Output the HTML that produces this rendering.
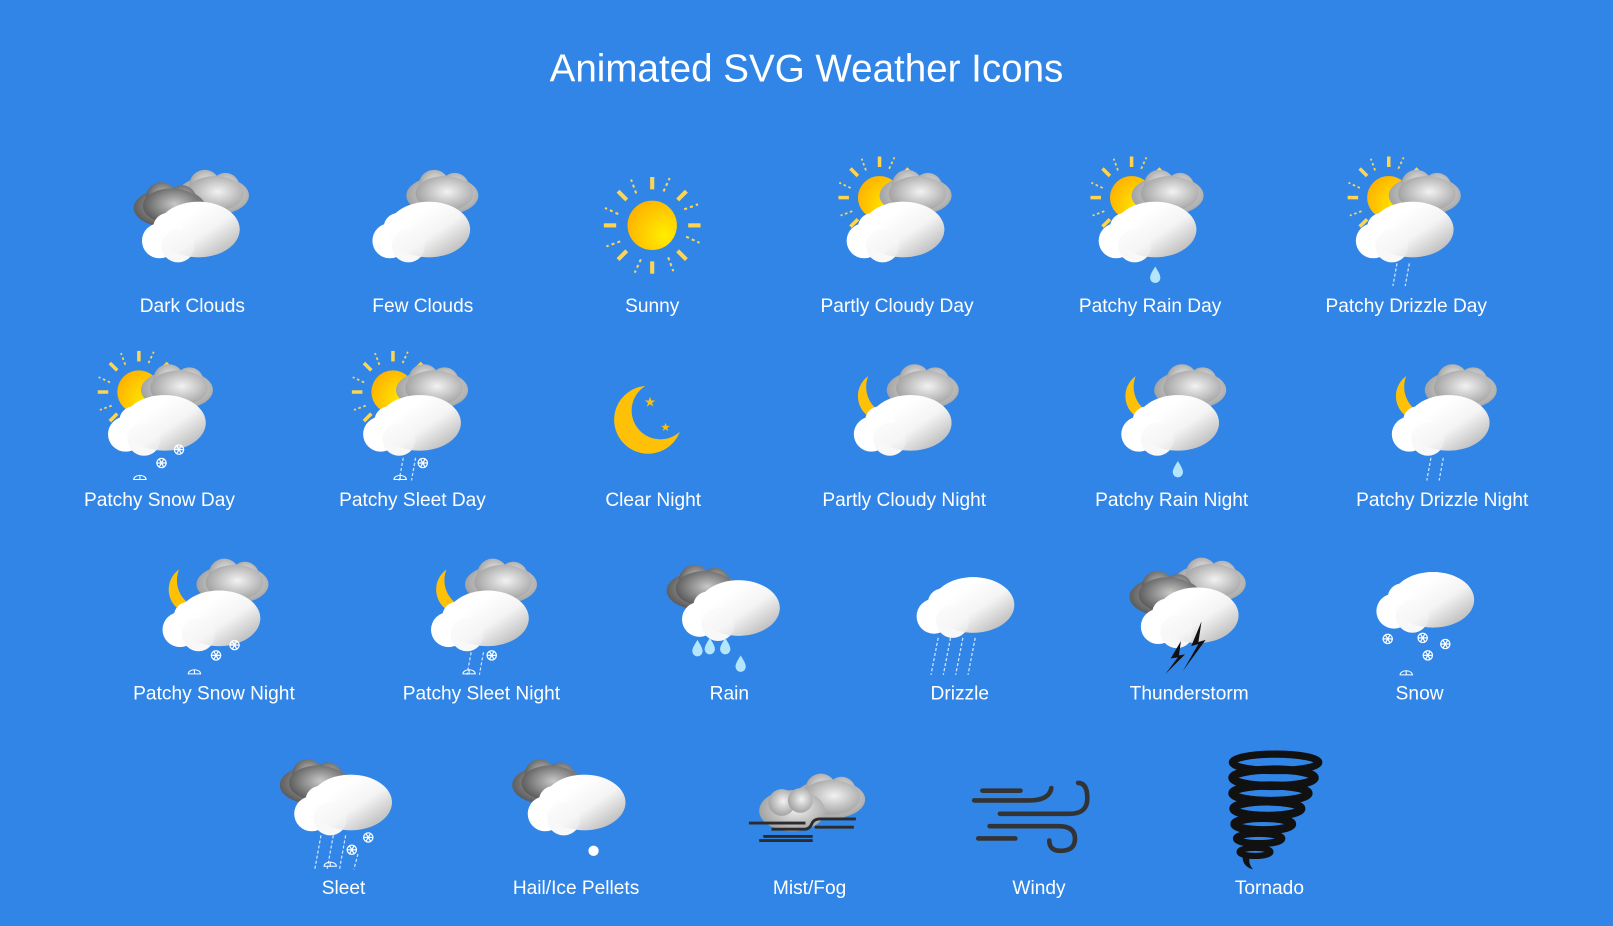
<!DOCTYPE html>
<html><head><meta charset="utf-8"><style>
html,body{margin:0;padding:0;background:#3185e6;overflow:hidden}
svg{display:block}
text{font-family:"Liberation Sans",sans-serif;fill:#fff}
</style></head><body>
<svg width="1613" height="926" viewBox="0 0 1568 900" xmlns="http://www.w3.org/2000/svg">
<defs>
<linearGradient id="gw" x1="0.3" y1="0.3" x2="0.9" y2="0.9"><stop offset="0" stop-color="#fff"/><stop offset="0.45" stop-color="#f4f4f4"/><stop offset="1" stop-color="#b9b9b9"/></linearGradient>
<radialGradient id="gg" cx="0.55" cy="0.45" r="0.6"><stop offset="0" stop-color="#f2f2f2"/><stop offset="1" stop-color="#9c9c9c"/></radialGradient>
<radialGradient id="gd" cx="0.55" cy="0.45" r="0.6"><stop offset="0" stop-color="#c8c8c8"/><stop offset="1" stop-color="#555"/></radialGradient>
<radialGradient id="gs" cx="0.75" cy="0.7" r="0.8"><stop offset="0" stop-color="#ffee00"/><stop offset="1" stop-color="#ffb300"/></radialGradient>
<g id="front">
 <ellipse cx="8" cy="-2" rx="40" ry="27" fill="url(#gw)"/>
 <circle cx="-30" cy="9" r="17" fill="#fff"/>
 <circle cx="-22" cy="-4" r="14" fill="#fff"/>
 <circle cx="-12" cy="14" r="16" fill="#f8f8f8"/>
 <ellipse cx="8" cy="-2" rx="40" ry="27" fill="url(#gw)" opacity="0.6"/>
</g>
<g id="back">
 <ellipse cx="0" cy="2" rx="35" ry="19" fill="url(#gg)"/>
 <circle cx="-8" cy="-8" r="15" fill="url(#gg)"/>
 <circle cx="12" cy="-6" r="14" fill="url(#gg)"/>
 <ellipse cx="2" cy="0" rx="28" ry="17" fill="url(#gg)"/>
</g>
<g id="dark">
 <ellipse cx="0" cy="2" rx="35" ry="19" fill="url(#gd)"/>
 <circle cx="-8" cy="-8" r="15" fill="url(#gd)"/>
 <circle cx="12" cy="-6" r="14" fill="url(#gd)"/>
 <ellipse cx="2" cy="0" rx="28" ry="17" fill="url(#gd)"/>
</g>
<g id="rays" stroke="#ffd54f" stroke-width="4">
 <g id="ray1"><line x1="0" y1="-35" x2="0" y2="-47"/><line x1="11" y1="-33" x2="17" y2="-46" stroke-width="2" stroke-dasharray="3 3"/></g>
 <use href="#ray1" transform="rotate(45)"/><use href="#ray1" transform="rotate(90)"/><use href="#ray1" transform="rotate(135)"/>
 <use href="#ray1" transform="rotate(180)"/><use href="#ray1" transform="rotate(225)"/><use href="#ray1" transform="rotate(270)"/><use href="#ray1" transform="rotate(315)"/>
</g>
<g id="sun"><use href="#rays"/><circle r="24" fill="url(#gs)"/></g>
<g id="psun"><use href="#rays" transform="scale(0.85)"/><circle r="21" fill="url(#gs)"/></g>
<mask id="mm" maskUnits="userSpaceOnUse" x="-60" y="-60" width="120" height="120"><rect x="-60" y="-60" width="120" height="120" fill="#fff"/><circle cx="12" cy="-9" r="28" fill="#000"/></mask>
<g id="moon"><circle r="33" fill="#ffc107" mask="url(#mm)"/></g>
<g id="smoon"><circle r="24" fill="#ffc107" mask="url(#mm)"/></g>
<path id="drop" d="M0,-8 C3,-3 5,0 5,3 A5,5 0 0 1 -5,3 C-5,0 -3,-3 0,-8Z" fill="#b3e5fc"/>
<g id="flake" stroke="#fff" stroke-width="1.2" fill="none"><circle r="4.5"/><line x1="-5" y1="0" x2="5" y2="0"/><line x1="-2.5" y1="-4.3" x2="2.5" y2="4.3"/><line x1="2.5" y1="-4.3" x2="-2.5" y2="4.3"/></g>
<g id="pile" stroke="#fff" stroke-width="1" fill="none"><path d="M-6,0 A6,4 0 0 1 6,0Z"/><line x1="0" y1="-4" x2="0" y2="0"/></g>
<g id="drz" stroke="#d0e4ff" stroke-width="1.2" stroke-dasharray="3 2"><line x1="0" y1="0" x2="-4" y2="22"/><line x1="12" y1="0" x2="8" y2="22"/></g>
</defs>

<text x="784" y="79" font-size="37.5" text-anchor="middle">Animated SVG Weather Icons</text>

<!-- Row 1 -->
<use href="#back" x="207" y="188"/><use href="#dark" x="165" y="200"/><use href="#front" x="185" y="225"/>
<use href="#back" x="430" y="188"/><use href="#front" x="409" y="225"/>
<use href="#sun" x="634" y="219"/>
<use href="#psun" x="855" y="192"/><use href="#back" x="890" y="188"/><use href="#front" x="870" y="225"/>
<use href="#psun" x="1100" y="192"/><use href="#back" x="1135" y="188"/><use href="#front" x="1115" y="225"/><use href="#drop" x="1123" y="267"/>
<use href="#psun" x="1350" y="192"/><use href="#back" x="1385" y="188"/><use href="#front" x="1365" y="225"/><use href="#drz" x="1358" y="256"/>

<g font-size="18.6" text-anchor="middle">
<text x="187" y="303">Dark Clouds</text><text x="411" y="303">Few Clouds</text><text x="634" y="303">Sunny</text>
<text x="872" y="303">Partly Cloudy Day</text><text x="1118" y="303">Patchy Rain Day</text><text x="1367" y="303">Patchy Drizzle Day</text>
<text x="155" y="492">Patchy Snow Day</text><text x="401" y="492">Patchy Sleet Day</text><text x="635" y="492">Clear Night</text>
<text x="879" y="492">Partly Cloudy Night</text><text x="1139" y="492">Patchy Rain Night</text><text x="1402" y="492">Patchy Drizzle Night</text>
<text x="208" y="680">Patchy Snow Night</text><text x="468" y="680">Patchy Sleet Night</text><text x="709" y="680">Rain</text>
<text x="933" y="680">Drizzle</text><text x="1156" y="680">Thunderstorm</text><text x="1380" y="680">Snow</text>
<text x="334" y="869">Sleet</text><text x="560" y="869">Hail/Ice Pellets</text><text x="787" y="869">Mist/Fog</text>
<text x="1010" y="869">Windy</text><text x="1234" y="869">Tornado</text>
</g>

<!-- Row 2 -->
<use href="#psun" x="135" y="381"/><use href="#back" x="172" y="377"/><use href="#front" x="152" y="413"/>
<use href="#flake" x="157" y="450"/><use href="#flake" x="174" y="437"/><use href="#pile" x="136" y="466"/>
<use href="#psun" x="382" y="381"/><use href="#back" x="420" y="377"/><use href="#front" x="400" y="413"/>
<use href="#flake" x="411" y="450"/><use href="#drz" x="392" y="445"/><use href="#pile" x="389" y="466"/>
<use href="#moon" x="630" y="408"/>
<text x="626" y="395" font-size="13" style="fill:#ffc107">★</text><text x="642" y="419" font-size="11" style="fill:#ffc107">★</text>
<use href="#smoon" x="858" y="385"/><use href="#back" x="897" y="377"/><use href="#front" x="877" y="413"/>
<use href="#smoon" x="1118" y="385"/><use href="#back" x="1157" y="377"/><use href="#front" x="1137" y="413"/><use href="#drop" x="1145" y="456"/>
<use href="#smoon" x="1381" y="385"/><use href="#back" x="1420" y="377"/><use href="#front" x="1400" y="413"/><use href="#drz" x="1391" y="445"/>

<!-- Row 3 -->
<use href="#smoon" x="188" y="573"/><use href="#back" x="226" y="566"/><use href="#front" x="205" y="603"/>
<use href="#flake" x="210" y="637"/><use href="#flake" x="228" y="627"/><use href="#pile" x="189" y="655"/>
<use href="#smoon" x="448" y="573"/><use href="#back" x="487" y="566"/><use href="#front" x="466" y="603"/>
<use href="#flake" x="478" y="637"/><use href="#drz" x="458" y="634"/><use href="#pile" x="456" y="655"/>
<use href="#dark" x="683" y="572"/><use href="#front" x="710" y="593"/>
<use href="#drop" x="678" y="630"/><use href="#drop" x="690" y="628"/><use href="#drop" x="705" y="628"/><use href="#drop" x="720" y="645"/>
<use href="#front" x="938" y="590"/>
<g stroke="#d0e4ff" stroke-width="1.2" stroke-dasharray="3 2"><line x1="912" y1="620" x2="905" y2="656"/><line x1="924" y1="620" x2="917" y2="656"/><line x1="936" y1="620" x2="929" y2="656"/><line x1="948" y1="620" x2="941" y2="656"/></g>
<use href="#back" x="1176" y="565"/><use href="#dark" x="1133" y="578"/><use href="#front" x="1156" y="600"/>
<path d="M1168,604 L1158,628 L1165,626 L1150,652 L1172,622 L1165,624 Z M1148,623 L1138,640 L1145,639 L1133,655 L1152,636 L1146,637 Z" fill="#111"/>
<use href="#front" x="1385" y="585"/>
<use href="#flake" x="1349" y="621"/><use href="#flake" x="1383" y="620"/><use href="#flake" x="1405" y="626"/><use href="#flake" x="1388" y="637"/><use href="#pile" x="1367" y="656"/>

<!-- Row 4 -->
<use href="#dark" x="307" y="761"/><use href="#front" x="333" y="782"/>
<use href="#flake" x="358" y="814"/><use href="#flake" x="342" y="826"/>
<g stroke="#d0e4ff" stroke-width="1.2" stroke-dasharray="3 2"><line x1="312" y1="812" x2="306" y2="845"/><line x1="324" y1="812" x2="318" y2="845"/><line x1="336" y1="812" x2="330" y2="845"/><line x1="348" y1="830" x2="344" y2="845"/></g>
<use href="#pile" x="321" y="842"/>
<use href="#dark" x="533" y="761"/><use href="#front" x="560" y="782"/>
<circle cx="577" cy="827" r="5" fill="#fff"/>
<use href="#back" x="806" y="775"/>
<g transform="translate(770,790)"><ellipse cx="0" cy="-2" rx="32" ry="20" fill="url(#gg)"/><circle cx="-10" cy="-10" r="13" fill="url(#gg)"/><circle cx="8" cy="-12" r="12" fill="url(#gg)"/></g>
<g stroke="#2b2b2b" stroke-width="2.8" fill="none">
<path d="M742,813 L790,813 M750,806 L782,806 Q787,806 789,801 Q791,796 797,796 L832,796 M728,800 L783,800 M792,804 L830,804 M738,817 L790,817"/>
</g>
<g stroke="#333" stroke-width="4.5" fill="none" stroke-linecap="round">
<path d="M955,768.5 L992,768.5"/>
<path d="M947,778 L1000,778 Q1020,778 1022,766"/>
<path d="M972,791 L1040,791 Q1057,791 1057,776 Q1057,761 1048,761"/>
<path d="M962,803 L1029,803 Q1045,803 1045,815 Q1045,827 1031,827 Q1020,827 1020,817"/>
<path d="M951,815 L987,815"/>
</g>
<g fill="none" stroke="#111">
<ellipse cx="1240" cy="741" rx="42" ry="8" stroke-width="7"/>
<ellipse cx="1238" cy="756" rx="40" ry="8" stroke-width="8"/>
<ellipse cx="1235" cy="771" rx="37" ry="7.5" stroke-width="8"/>
<ellipse cx="1232" cy="786" rx="33" ry="7" stroke-width="8"/>
<ellipse cx="1228" cy="801" rx="28" ry="6" stroke-width="8"/>
<ellipse cx="1224" cy="815" rx="22" ry="5" stroke-width="7"/>
<ellipse cx="1220" cy="828" rx="15" ry="4" stroke-width="6"/>
</g>
<path d="M1208,828 Q1206,842 1218,845 Q1212,838 1216,830Z" fill="#111"/>
</svg>
</body></html>
